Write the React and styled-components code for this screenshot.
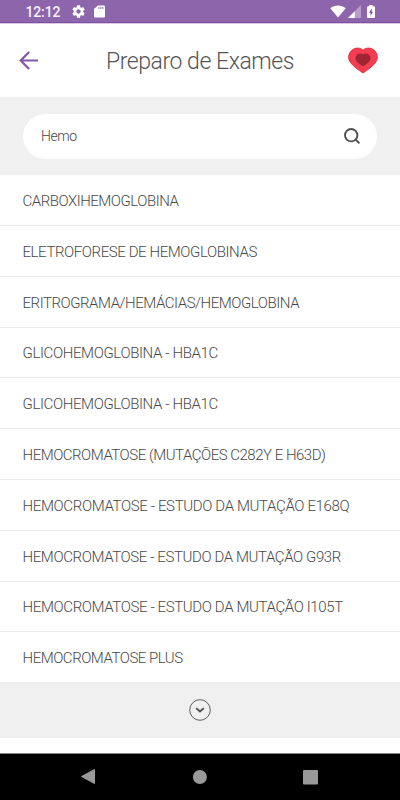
import React from "react";
import styled, { createGlobalStyle } from "styled-components";

const GlobalStyle = createGlobalStyle`
  * { box-sizing: border-box; }
  body { margin: 0; background: #fff; font-family: Roboto, "Noto Sans", sans-serif; font-weight: 300; }
`;

const Screen = styled.div`
  width: 400px;
  height: 800px;
  display: flex;
  flex-direction: column;
  overflow: hidden;
  background: #fff;
`;
const StatusBar = styled.div`
  height: 24px;
  flex: none;
  display: flex;
  align-items: center;
  background: #8d65ab;
  border-bottom: 1px solid #d9c9e4;
  box-shadow: inset 0 -1px #7f50a2;
  padding: 0 25px 0 25.5px;
`;
const Clock = styled.span`
  font: 500 14px/22px Roboto, sans-serif;
  letter-spacing: -0.15px;
  color: #f7f2fa;
  width: 45px;
  padding-top: 1px;
`;
const StatusIcons = styled.div`
  display: flex;
  align-items: center;
  gap: ${(p) => p.$gap}px;
  margin-left: ${(p) => (p.$end ? "auto" : 0)};
  svg { display: block; }
`;
const Header = styled.header`
  height: 73.3px;
  flex: none;
  display: grid;
  grid-template-columns: 20px 1fr 32px;
  align-items: center;
  padding: 0 21.5px 0 19px;
`;
const Title = styled.h1`
  margin: 3px 0 0 67px;
  font-size: 23px;
  line-height: 32px;
  font-weight: 300;
  letter-spacing: ${(p) => p.$tracking}px;
  color: #555;
  white-space: nowrap;
`;
const SearchArea = styled.div`
  height: 77.7px;
  flex: none;
  background: #f0f0f0;
  padding: 16.7px 23px 0;
`;
const SearchField = styled.div`
  height: 45px;
  border-radius: 23px;
  background: #fff;
  display: flex;
  align-items: center;
  justify-content: space-between;
  padding: 0 17px 0 18px;
  font-size: 14px;
  letter-spacing: ${(p) => p.$tracking}px;
  color: #444;
`;
const List = styled.ul`
  list-style: none;
  margin: 0;
  padding: 0.2px 0 0;
  height: 507.3px;
  flex: none;
`;
const Row = styled.li`
  height: 50.8px;
  display: flex;
  align-items: center;
  padding: 1.8px 0 0 22.5px;
  font-size: 15px;
  letter-spacing: ${(p) => p.$tracking}px;
  color: #484848;
  white-space: nowrap;
  border-bottom: 1px solid #ebebeb;
  &:last-child { border-bottom: 0; height: 49.8px; }
`;
const More = styled.div`
  height: 55.7px;
  flex: none;
  display: flex;
  align-items: center;
  justify-content: center;
  background: #f0f0f0;
`;
const NavBar = styled.nav`
  height: 47px;
  flex: none;
  margin-top: auto;
  border-top: 1px solid #85888a;
  background: #000;
  display: flex;
  align-items: center;
  justify-content: space-between;
  padding: 0 82px 0 80px;
`;

const EXAMS = [
  ["CARBOXIHEMOGLOBINA", -0.48],
  ["ELETROFORESE DE HEMOGLOBINAS", -0.41],
  ["ERITROGRAMA/HEMÁCIAS/HEMOGLOBINA", -0.46],
  ["GLICOHEMOGLOBINA - HBA1C", -0.38],
  ["GLICOHEMOGLOBINA - HBA1C", -0.38],
  ["HEMOCROMATOSE (MUTAÇÕES C282Y E H63D)", -0.49],
  ["HEMOCROMATOSE - ESTUDO DA MUTAÇÃO E168Q", -0.36],
  ["HEMOCROMATOSE - ESTUDO DA MUTAÇÃO G93R", -0.4],
  ["HEMOCROMATOSE - ESTUDO DA MUTAÇÃO I105T", -0.38],
  ["HEMOCROMATOSE PLUS", -0.48],
];

const Gear = () => (
  <svg width="15" height="15" viewBox="0 0 24 24" fill="#fff">
    <path d="M19.43 12.98c.04-.32.07-.64.07-.98s-.03-.66-.07-.98l2.11-1.65c.19-.15.24-.42.12-.64l-2-3.46c-.12-.22-.39-.3-.61-.22l-2.49 1c-.52-.4-1.08-.73-1.69-.98l-.38-2.65C14.46 2.18 14.25 2 14 2h-4c-.25 0-.46.18-.49.42l-.38 2.65c-.61.25-1.17.59-1.69.98l-2.49-1c-.23-.09-.49 0-.61.22l-2 3.46c-.13.22-.07.49.12.64l2.11 1.65c-.04.32-.07.65-.07.98s.03.66.07.98l-2.11 1.65c-.19.15-.24.42-.12.64l2 3.46c.12.22.39.3.61.22l2.49-1c.52.4 1.08.73 1.69.98l.38 2.65c.03.24.24.42.49.42h4c.25 0 .46-.18.49-.42l.38-2.65c.61-.25 1.17-.59 1.69-.98l2.49 1c.23.09.49 0 .61-.22l2-3.46c.12-.22.07-.49-.12-.64l-2.11-1.65zM12 15.5c-1.93 0-3.5-1.57-3.5-3.5s1.57-3.5 3.5-3.5 3.5 1.57 3.5 3.5-1.57 3.5-3.5 3.5z" />
  </svg>
);
const SdCard = () => (
  <svg width="11" height="13" viewBox="0 0 10 13" preserveAspectRatio="none">
    <path d="M3.6.5H9a1 1 0 0 1 1 1v10a1 1 0 0 1-1 1H1a1 1 0 0 1-1-1V4z" fill="#fff" />
    <path d="M4.5 2v2M6.3 2v2M8.1 2v2" stroke="#8d65ab" strokeWidth=".9" />
  </svg>
);
const Wifi = () => (
  <svg width="16" height="13" viewBox="0 0 16 13">
    <path d="M.3 3.2C4.700-.3 11.300-.3 15.700 3.200L8 12.500z" fill="#fff" />
  </svg>
);
const Signal = () => (
  <svg width="13" height="13" viewBox="0 0 13 13">
    <path d="M0 13L13 0v13z" fill="#b99dcc" />
    <path d="M0 13L6.8 6.2V13z" fill="#fff" />
  </svg>
);
const Battery = () => (
  <svg width="8" height="13" viewBox="0 0 8 13">
    <path d="M2.3 0h3.4v1.3H7a1 1 0 0 1 1 1V12a1 1 0 0 1-1 1H1a1 1 0 0 1-1-1V2.300a1 1 0 0 1 1-1h1.300z" fill="#fff" />
    <path d="M4.800 3.600L2 7.700h1.600v3.200L6 6.800H4.600z" fill="#8046a5" />
  </svg>
);
const BackArrow = () => (
  <svg width="20" height="20" viewBox="0 0 20 20" fill="none" stroke="#8556a8" strokeWidth="2.200">
    <path d="M19 9.500H2M10.100 1L1.700 9.500l8.400 8.500" />
  </svg>
);
const Heart = () => (
  <svg width="32" height="28" viewBox="0 0 32 28">
    <path d="M16 3.200C18.500.6 23.500.1 27 3.100c4 3.500 4.300 8.500 1.700 12.200C26 19.200 20.500 23 16 26 11.500 23 6 19.200 3.300 15.300.7 11.600 1 6.600 5 3.100 8.500.1 13.500.6 16 3.200z" fill="#f43d50" stroke="#dc2438" strokeWidth=".8" />
    <path d="M16 7.600c1.400-1.300 4.100-1.500 6 .1 2 1.700 2 4.400.6 6.200-1.500 1.900-4.100 3.800-6.600 5.400-2.500-1.600-5.100-3.500-6.600-5.400C8 12.100 8 9.400 10 7.700c1.900-1.600 4.600-1.400 6-.1z" fill="#a02433" />
  </svg>
);
const SearchIcon = () => (
  <svg width="16" height="16" viewBox="0 0 16 16" fill="none" stroke="#505050" strokeWidth="1.900">
    <circle cx="7.200" cy="7.200" r="6.200" />
    <path d="M11.600 11.600l3.800 3.700" />
  </svg>
);
const ChevronCircle = () => (
  <svg width="22" height="22" viewBox="0 0 22 22" fill="none" stroke="#505050">
    <circle cx="11" cy="11" r="10.300" strokeWidth=".9" />
    <path d="M7.200 9.100L11 12.500l3.800-3.400" strokeWidth="1.900" />
  </svg>
);

export default function App() {
  return (
    <Screen>
      <GlobalStyle />
      <StatusBar>
        <Clock>12:12</Clock>
        <StatusIcons $gap={8}><Gear /><SdCard /></StatusIcons>
        <StatusIcons $end $gap={6.5}>
          <StatusIcons $gap={2}><Wifi /><Signal /></StatusIcons>
          <Battery />
        </StatusIcons>
      </StatusBar>
      <Header>
        <BackArrow />
        <Title $tracking={-0.45}>Preparo de Exames</Title>
        <Heart />
      </Header>
      <SearchArea>
        <SearchField $tracking={-0.4}>
          <span>Hemo</span>
          <SearchIcon />
        </SearchField>
      </SearchArea>
      <List>
        {EXAMS.map(([name, tracking], i) => (
          <Row key={i} $tracking={tracking}>{name}</Row>
        ))}
      </List>
      <More><ChevronCircle /></More>
      <NavBar>
        <svg width="16" height="18" viewBox="0 0 16 18"><path d="M14.500 1.500v14L1.500 8.500z" fill="#999" stroke="#999" strokeLinejoin="round" /></svg>
        <svg width="15" height="15" viewBox="0 0 15 15"><circle cx="7.900" cy="7" r="7" fill="#999" /></svg>
        <svg width="15" height="15" viewBox="0 0 15 15"><rect width="15" height="14.500" rx="1" fill="#999" /></svg>
      </NavBar>
    </Screen>
  );
}
